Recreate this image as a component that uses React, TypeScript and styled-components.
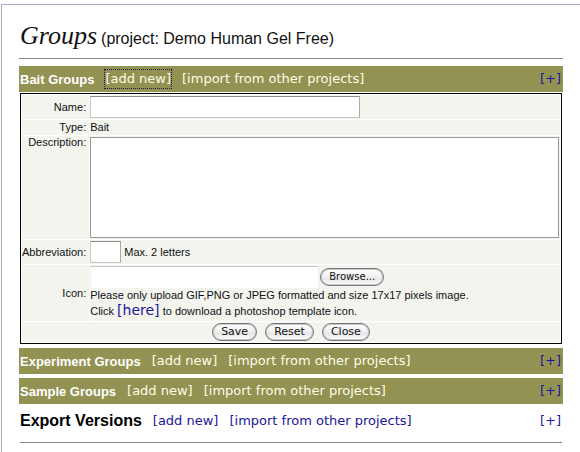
import React from "react";
import styled, { createGlobalStyle, css } from "styled-components";

const GlobalStyle = createGlobalStyle`
  * { box-sizing: border-box; }
  html, body, #root { height: 100%; }
  body {
    margin: 0;
    background: #fff;
    color: #111;
    font-family: "Liberation Sans", Arial, sans-serif;
    font-size: 11px;
  }
`;

const Page = styled.div`
  min-height: 100%;
  padding: 4px 0 0 1px;
`;

const Frame = styled.main`
  min-height: calc(100vh - 4px);
  padding: 15px 17px 0 17px;
  border-top: 1px solid #a9a9c4;
  border-left: 1px solid #a9a9c4;
`;

const TitleRow = styled.header`
  display: flex;
  align-items: baseline;
  gap: 4px;
  height: 39px;
  padding-left: 1px;
  border-bottom: 1px solid #85858c;
  white-space: nowrap;
`;

const Title = styled.h1`
  margin: 0;
  font: italic 400 26px/32px "Apple Chancery", "Lucida Calligraphy", "Liberation Serif", serif;
`;

const Project = styled.span`
  font-size: 16px;
`;

const Bar = styled.section<{ $plain?: boolean }>`
  display: flex;
  align-items: center;
  gap: 11px;
  height: 26px;
  margin-top: 4px;
  padding: 0 2px 0 1px;
  white-space: nowrap;
  background: ${(p) => (p.$plain ? "transparent" : "#929252")};
  color: ${(p) => (p.$plain ? "#000" : "#fff")};
`;

const BarTitle = styled.h2<{ $large?: boolean }>`
  margin: 0;
  font-size: ${(p) => (p.$large ? 16 : 13)}px;
  font-weight: 700;
`;

const BarLink = styled.a<{ $tone: "light" | "navy"; $focused?: boolean; $end?: boolean }>`
  font: 13px/18px Verdana, "DejaVu Sans", sans-serif;
  color: ${(p) => (p.$tone === "light" ? "#fdfde8" : "#1c1698")};
  text-decoration: none;
  ${(p) => p.$focused && css`outline: 1px dotted #1c1650;`}
  ${(p) => p.$end && css`margin-left: auto;`}
`;

const FormBox = styled.form`
  margin: 1px 1px 3px;
  padding: 1px;
  border: 1px solid #000;
  background: #fff;
`;

const FormTable = styled.table`
  width: 100%;
  border-collapse: separate;
  border-spacing: 0 1px;
  margin: -1px 0;
`;

const LabelCell = styled.th<{ $top?: boolean }>`
  width: 67px;
  padding: 0 3px 0 0;
  background: #f3f4ee;
  border-right: 1px solid #fafaf7;
  font-weight: 400;
  text-align: right;
  vertical-align: ${(p) => (p.$top ? "top" : "middle")};
  line-height: 13px;
  white-space: nowrap;
`;

const Cell = styled.td`
  padding: 1px 1px 1px 0;
  background: #f3f4ee;
  line-height: 13px;
`;

const ButtonCell = styled.td`
  padding: 1px 0;
  background: #f3f4ee;
`;

const Line = styled.div<{ $tight?: boolean }>`
  display: flex;
  align-items: center;
  gap: ${(p) => (p.$tight ? 1 : 3)}px;
`;

const TextBox = styled.input<{ $width: number }>`
  display: block;
  width: ${(p) => p.$width}px;
  height: 22px;
  padding: 0 3px;
  border: 1px solid #c4c4c4;
  border-top-color: #8c8c8c;
  border-right-color: #aaa;
  border-radius: 0;
  background: #fff;
  font: inherit;
`;

const FileBox = styled(TextBox)`
  border-color: #c8c8cc #eee #fff #eee;
`;

const Area = styled.textarea`
  display: block;
  width: 100%;
  height: 101px;
  border: 1px solid #999;
  border-radius: 0;
  background: #fff;
  font: inherit;
  resize: none;
`;

const HelpLine = styled.p<{ $tall?: boolean }>`
  margin: 0;
  line-height: ${(p) => (p.$tall ? 18 : 14)}px;
`;

const HereLink = styled.a`
  font: 14px/16px Verdana, "DejaVu Sans", sans-serif;
  color: #1c1698;
  text-decoration: none;
`;

const Actions = styled.div`
  display: flex;
  justify-content: center;
  gap: 8px;
`;

const Pill = styled.button<{ $compact?: boolean }>`
  height: 18px;
  padding: 0 8px;
  border: 1px solid #77777b;
  border-radius: 9px;
  background: linear-gradient(#fff, #f0f0f0 50%, #e6e6e6 55%, #fafafa);
  box-shadow: inset 0 0 0 1px #c8c8ca;
  color: #111;
  font: ${(p) => (p.$compact ? 10 : 11)}px/14px Verdana, "DejaVu Sans", sans-serif;
`;

type GroupBarProps = { title: string; plain?: boolean; focused?: boolean };

function GroupBar({ title, plain, focused }: GroupBarProps) {
  const tone = plain ? "navy" : "light";
  return (
    <Bar $plain={plain}>
      <BarTitle $large={plain}>{title}</BarTitle>
      <BarLink href="#add" $tone={tone} $focused={focused}>[add new]</BarLink>
      <BarLink href="#import" $tone={tone}>[import from other projects]</BarLink>
      <BarLink href="#expand" $tone="navy" $end>[+]</BarLink>
    </Bar>
  );
}

const FirstBar = styled.div`
  padding-top: 3px;
`;

const Rule = styled.hr`
  height: 1px;
  margin: 8px 1px 0;
  border: 0;
  background: #85858c;
`;

function GroupForm() {
  return (
    <FormBox onSubmit={(e) => e.preventDefault()}>
      <FormTable>
        <tbody>
          <tr>
            <LabelCell scope="row"><label htmlFor="name">Name:</label></LabelCell>
            <Cell><TextBox id="name" $width={270} /></Cell>
          </tr>
          <tr>
            <LabelCell scope="row">Type:</LabelCell>
            <Cell>Bait</Cell>
          </tr>
          <tr>
            <LabelCell scope="row" $top><label htmlFor="description">Description:</label></LabelCell>
            <Cell><Area id="description" /></Cell>
          </tr>
          <tr>
            <LabelCell scope="row"><label htmlFor="abbreviation">Abbreviation:</label></LabelCell>
            <Cell>
              <Line>
                <TextBox id="abbreviation" maxLength={2} $width={31} />
                <span>Max. 2 letters</span>
              </Line>
            </Cell>
          </tr>
          <tr>
            <LabelCell scope="row"><label htmlFor="icon">Icon:</label></LabelCell>
            <Cell>
              <Line $tight>
                <FileBox id="icon" $width={229} />
                <Pill type="button" $compact>Browse...</Pill>
              </Line>
              <HelpLine>Please only upload GIF,PNG or JPEG formatted and size 17x17 pixels image.</HelpLine>
              <HelpLine $tall>Click <HereLink href="#template">[here]</HereLink> to download a photoshop template icon.</HelpLine>
            </Cell>
          </tr>
          <tr>
            <ButtonCell colSpan={2}>
              <Actions>
                <Pill type="submit">Save</Pill>
                <Pill type="reset">Reset</Pill>
                <Pill type="button">Close</Pill>
              </Actions>
            </ButtonCell>
          </tr>
        </tbody>
      </FormTable>
    </FormBox>
  );
}

export default function App() {
  return (
    <Page>
      <GlobalStyle />
      <Frame>
        <TitleRow>
          <Title>Groups</Title>
          <Project>(project: Demo Human Gel Free)</Project>
        </TitleRow>
        <FirstBar>
          <GroupBar title="Bait Groups" focused />
        </FirstBar>
        <GroupForm />
        <GroupBar title="Experiment Groups" />
        <GroupBar title="Sample Groups" />
        <GroupBar title="Export Versions" plain />
        <Rule />
      </Frame>
    </Page>
  );
}
